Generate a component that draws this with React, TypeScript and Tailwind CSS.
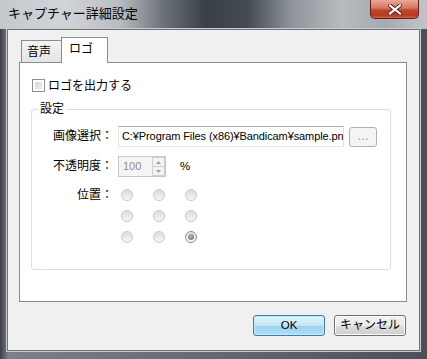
import React from 'react';

function Radio({ checked = false }: { checked?: boolean }) {
  return (
    <div
      className={`w-[12px] h-[12px] rounded-full border flex items-center justify-center ${
        checked
          ? 'border-[#8d8d8d] bg-[linear-gradient(180deg,#e4e4e4,#f8f8f8)]'
          : 'border-[#c9c9c9] bg-[linear-gradient(180deg,#dcdcdc,#f6f6f6)]'
      }`}
    >
      {checked && <div className="w-[6px] h-[6px] rounded-full bg-[radial-gradient(circle_at_40%_35%,#b0b0b0,#6e6e6e)]" />}
    </div>
  );
}

export default function App() {
  const radios = [0, 1, 2, 3, 4, 5, 6, 7, 8];

  return (
    <div className="w-[427px] h-[359px] flex flex-col overflow-hidden bg-[linear-gradient(90deg,#3c4046_0%,#7c8187_2%,#4b5056_100%)] font-['Liberation_Sans','Noto_Sans_CJK_JP',sans-serif] text-[12px] text-black">
      {/* Title bar */}
      <div className="h-[29px] shrink-0 flex items-start justify-between bg-[linear-gradient(90deg,#c4c8cc_0%,#d2d5d8_15%,#b9bdc1_28%,#6d737a_38%,#3a4048_48%,#444a52_58%,#8d9399_68%,#b7bbbf_80%,#a7abb0_90%,#c0c4c8_100%)]">
        <span className="pl-[8px] pt-[5px] text-[13px] leading-[18px] text-black">キャプチャー詳細設定</span>
        <div className="mr-[8px] w-[49px] h-[19px] rounded-b-[5px] border border-t-0 border-[#5e2218] bg-[linear-gradient(180deg,#e9a999_0%,#d9745d_45%,#c1452b_55%,#b73a22_85%,#d0624a_100%)] flex items-center justify-center">
          <svg width="14" height="11" viewBox="0 0 14 11">
            <path d="M2 1.5 L12 9.5 M12 1.5 L2 9.5" stroke="#4a1d15" strokeWidth="4" strokeLinecap="square" />
            <path d="M2 1.5 L12 9.5 M12 1.5 L2 9.5" stroke="#ffffff" strokeWidth="2.2" strokeLinecap="square" />
          </svg>
        </div>
      </div>

      {/* Client area */}
      <div className="flex-1 flex pl-[7px] pr-[7px] pb-[8px]">
        <div className="flex-1 flex flex-col bg-[#f0f0f0] border border-[#6f7479] shadow-[0_0_0_1px_#c8ccd0]">
          {/* Tabs + panel */}
          <div className="ml-[11px] mr-[12px] mt-[7px] flex flex-col">
            <div className="relative z-10 flex items-end h-[25px] pl-[2px]">
              <div className="w-[41px] h-[22px] border border-b-0 border-[#898c95] bg-[linear-gradient(180deg,#f3f3f3,#e5e5e5)] pl-[5px] pt-[3px] leading-[16px]">
                音声
              </div>
              <div className="-ml-px w-[47px] h-[26px] -mb-px border border-b-0 border-[#898c95] bg-white pl-[7px] pt-[3px] leading-[16px]">
                ロゴ
              </div>
            </div>
            <div className="h-[240px] border border-[#898c95] bg-white flex flex-col">
              {/* Checkbox */}
              <div className="mt-[16px] ml-[12px] flex items-center gap-[3px] h-[13px]">
                <div className="w-[13px] h-[13px] border border-[#8e8f8f] bg-white p-[2px]">
                  <div className="w-full h-full bg-[linear-gradient(135deg,#cbcfd5,#f6f6f6)] border border-[#dfe1e4]" />
                </div>
                <span className="leading-[14px]">ロゴを出力する</span>
              </div>

              {/* Group box */}
              <fieldset className="ml-[11px] mt-[10px] w-[360px] h-[168px] border border-[#d5dfe5] rounded-[3px] px-0">
                <legend className="ml-[6px] px-[2px] leading-[14px]">設定</legend>
                <div className="grid grid-cols-[81px_1fr] gap-x-[5px] mt-[10px]">
                  <span className="text-right leading-[21px]">画像選択：</span>
                  <div className="flex items-center gap-[5px]">
                    <div className="w-[226px] h-[21px] border border-[#abadb3] border-l-[#e2e3ea] border-r-[#dbdfe6] border-b-[#e3e9ef] bg-white pl-[3px] overflow-hidden whitespace-nowrap text-[11px] tracking-[-0.1px] leading-[19px]">
                      C:¥Program Files (x86)¥Bandicam¥sample.png
                    </div>
                    <div className="w-[28px] h-[20px] rounded-[3px] border border-[#adb2b5] bg-[#f4f4f4] text-[#9a9a9a] text-[12px] leading-[16px] text-center">
                      …
                    </div>
                  </div>

                  <span className="mt-[9px] text-right leading-[21px]">不透明度：</span>
                  <div className="mt-[9px] flex items-center">
                    <div className="w-[48px] h-[21px] border border-[#c6c7c8] bg-[#f4f4f4] flex">
                      <span className="flex-1 pl-[4px] text-[11px] leading-[19px] text-[#8d8d8d]">100</span>
                      <div className="w-[13px] flex flex-col">
                        <div className="flex-1 border border-[#d0d0d0] bg-[#f4f4f4] flex items-center justify-center">
                          <svg width="5" height="3" viewBox="0 0 5 3"><path d="M0 3 L2.5 0 L5 3 Z" fill="#a0a0a0" /></svg>
                        </div>
                        <div className="flex-1 border border-t-0 border-[#d0d0d0] bg-[#f4f4f4] flex items-center justify-center">
                          <svg width="5" height="3" viewBox="0 0 5 3"><path d="M0 0 L2.5 3 L5 0 Z" fill="#a0a0a0" /></svg>
                        </div>
                      </div>
                    </div>
                    <span className="ml-[14px] text-[11.5px]">%</span>
                  </div>

                  <span className="mt-[11px] text-right leading-[14px]">位置：</span>
                  <div className="mt-[12px] ml-[3px] grid grid-cols-[12px_12px_12px] gap-x-[20px] gap-y-[9px]">
                    {radios.map((i) => (
                      <Radio key={i} checked={i === 8} />
                    ))}
                  </div>
                </div>
              </fieldset>
            </div>
          </div>

          {/* Buttons */}
          <div className="mt-[13px] mr-[13px] flex justify-end gap-[9px]">
            <div className="w-[72px] h-[21px] rounded-[3px] border border-[#3c7fb1] bg-[linear-gradient(180deg,#e5f4fc_0%,#c4e5f6_50%,#98d1ef_51%,#b2def5_100%)] shadow-[inset_0_0_0_1px_#c6e8fb] text-center leading-[19px] text-[11.5px]">
              OK
            </div>
            <div className="w-[72px] h-[21px] rounded-[3px] border border-[#707070] bg-[linear-gradient(180deg,#f2f2f2_0%,#ebebeb_50%,#dddddd_51%,#cfcfcf_100%)] shadow-[inset_0_0_0_1px_#fcfcfc] text-center leading-[19px]">
              キャンセル
            </div>
          </div>
        </div>
      </div>
    </div>
  );
}
